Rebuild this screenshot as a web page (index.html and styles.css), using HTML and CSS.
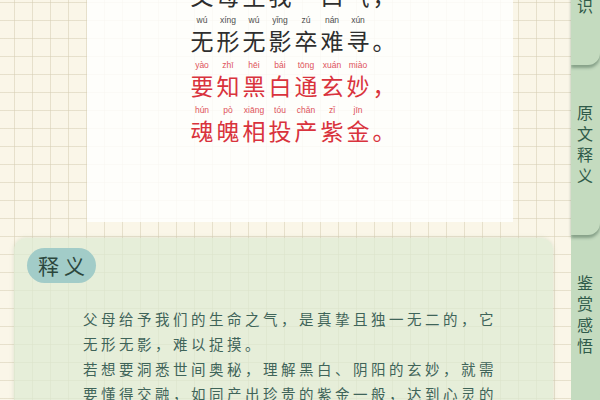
FILE: index.html
```html
<!DOCTYPE html>
<html lang="zh">
<head>
<meta charset="utf-8">
<link rel="stylesheet" href="styles.css">
</head>
<body>
<div class="page">
  <main class="main">
    <section class="poem-card">
      <div class="verse">
        <div class="line">
          <span class="col"><i>fù</i><b>父</b></span><span class="col"><i>mǔ</i><b>母</b></span><span class="col"><i>shēng</i><b>生</b></span><span class="col"><i>wǒ</i><b>我</b></span><span class="col"><i>yī</i><b>一</b></span><span class="col"><i>kǒu</i><b>口</b></span><span class="col"><i>qì</i><b>气</b></span><span class="col"><i></i><b>，</b></span>
        </div>
        <div class="line">
          <span class="col"><i>wú</i><b>无</b></span><span class="col"><i>xíng</i><b>形</b></span><span class="col"><i>wú</i><b>无</b></span><span class="col"><i>yǐng</i><b>影</b></span><span class="col"><i>zú</i><b>卒</b></span><span class="col"><i>nán</i><b>难</b></span><span class="col"><i>xún</i><b>寻</b></span><span class="col"><i></i><b>。</b></span>
        </div>
        <div class="line red">
          <span class="col"><i>yào</i><b>要</b></span><span class="col"><i>zhī</i><b>知</b></span><span class="col"><i>hēi</i><b>黑</b></span><span class="col"><i>bái</i><b>白</b></span><span class="col"><i>tōng</i><b>通</b></span><span class="col"><i>xuán</i><b>玄</b></span><span class="col"><i>miào</i><b>妙</b></span><span class="col"><i></i><b>，</b></span>
        </div>
        <div class="line red">
          <span class="col"><i>hún</i><b>魂</b></span><span class="col"><i>pò</i><b>魄</b></span><span class="col"><i>xiāng</i><b>相</b></span><span class="col"><i>tóu</i><b>投</b></span><span class="col"><i>chǎn</i><b>产</b></span><span class="col"><i>zǐ</i><b>紫</b></span><span class="col"><i>jīn</i><b>金</b></span><span class="col"><i></i><b>。</b></span>
        </div>
      </div>
    </section>
    <section class="explain">
      <div class="pill">释义</div>
      <div class="explain-text">
        <p>父母给予我们的生命之气，是真挚且独一无二的，它无形无影，难以捉摸。</p>
        <p>若想要洞悉世间奥秘，理解黑白、阴阳的玄妙，就需要懂得交融，如同产出珍贵的紫金一般，达到心灵的升华。</p>
      </div>
    </section>
  </main>
  <nav class="sidebar">
    <div class="tab t1"><span>背景知识</span></div>
    <div class="tab t2"><span>原文释义</span></div>
    <div class="tab t3"><span>鉴赏感悟</span></div>
  </nav>
</div>
</body>
</html>
```
FILE: styles.css
```css
* { box-sizing: border-box; }
html, body {
  margin: 0;
  padding: 0;
  width: 600px;
  height: 400px;
  overflow: hidden;
}
body {
  font-family: "Noto Sans CJK SC", "Noto Sans", sans-serif;
  background-color: #faf6e8;
  background-image:
    linear-gradient(to right, rgba(214, 206, 180, 0.55) 1px, transparent 1px),
    linear-gradient(to bottom, rgba(214, 206, 180, 0.55) 1px, transparent 1px);
  background-size: 18px 18px;
  background-position: 14px 2px;
}
.page {
  display: flex;
  width: 600px;
  height: 400px;
}
.main {
  flex: 1;
  display: flex;
  flex-direction: column;
  min-width: 0;
  overflow: hidden;
}
.poem-card {
  flex: 0 0 262px;
  margin: -40px 0 0 87px;
  width: 426px;
  height: 262px;
  background: rgba(255, 255, 255, 0.82);
  padding: 10px 0 0 102px;
}
.verse {
  display: flex;
  flex-direction: column;
  gap: 5px;
}
.line {
  display: flex;
  color: #2e2e2e;
}
.line.red { color: #d9333d; }
.col {
  width: 26px;
  display: flex;
  flex-direction: column;
  align-items: center;
}
.col i {
  font-style: normal;
  font-family: "Liberation Sans", Arial, sans-serif;
  font-size: 8.5px;
  line-height: 10px;
  height: 10px;
  white-space: nowrap;
  opacity: 0.85;
}
.col b {
  font-weight: 400;
  font-size: 23px;
  line-height: 30px;
  height: 30px;
}
.explain {
  flex: 1 1 0;
  min-height: 0;
  overflow: hidden;
  margin: 16px 0 0 14px;
  width: 539px;
  background: rgba(222, 234, 210, 0.72);
  border-radius: 12px 12px 0 0;
  box-shadow: 0 0 4px rgba(160, 180, 150, 0.35);
  padding: 10px 0 0 13px;
}
.pill {
  width: 69px;
  height: 35px;
  border-radius: 18px;
  background: #a2ccc8;
  color: #2c473d;
  font-size: 21px;
  line-height: 35px;
  text-align: center;
  letter-spacing: 5px;
  padding-left: 5px;
}
.explain-text {
  margin: 23px 0 0 56px;
  width: 418px;
  color: #3f6459;
  font-size: 14.5px;
  line-height: 25px;
  letter-spacing: 3.5px;
}
.explain-text p { margin: 0; }
.sidebar {
  width: 29px;
  flex: 0 0 29px;
  display: flex;
  flex-direction: column;
  background: #c4dbbf;
}
.tab {
  position: relative;
  height: 170px;
  flex: 0 0 170px;
  background: #c4dbbf;
  border-bottom-right-radius: 12px;
  padding-top: 40px;
  display: flex;
  justify-content: center;
}
.tab.t1 { margin-top: -105px; z-index: 3; box-shadow: 0 3px 3px rgba(60, 90, 70, 0.45); }
.tab.t2 { z-index: 2; box-shadow: 0 3px 3px rgba(60, 90, 70, 0.45); }
.tab.t3 { z-index: 1; }
.tab span {
  writing-mode: vertical-rl;
  color: #2f5a49;
  font-size: 16px;
  letter-spacing: 5px;
  line-height: 16px;
  margin-left: -1px;
}
```
